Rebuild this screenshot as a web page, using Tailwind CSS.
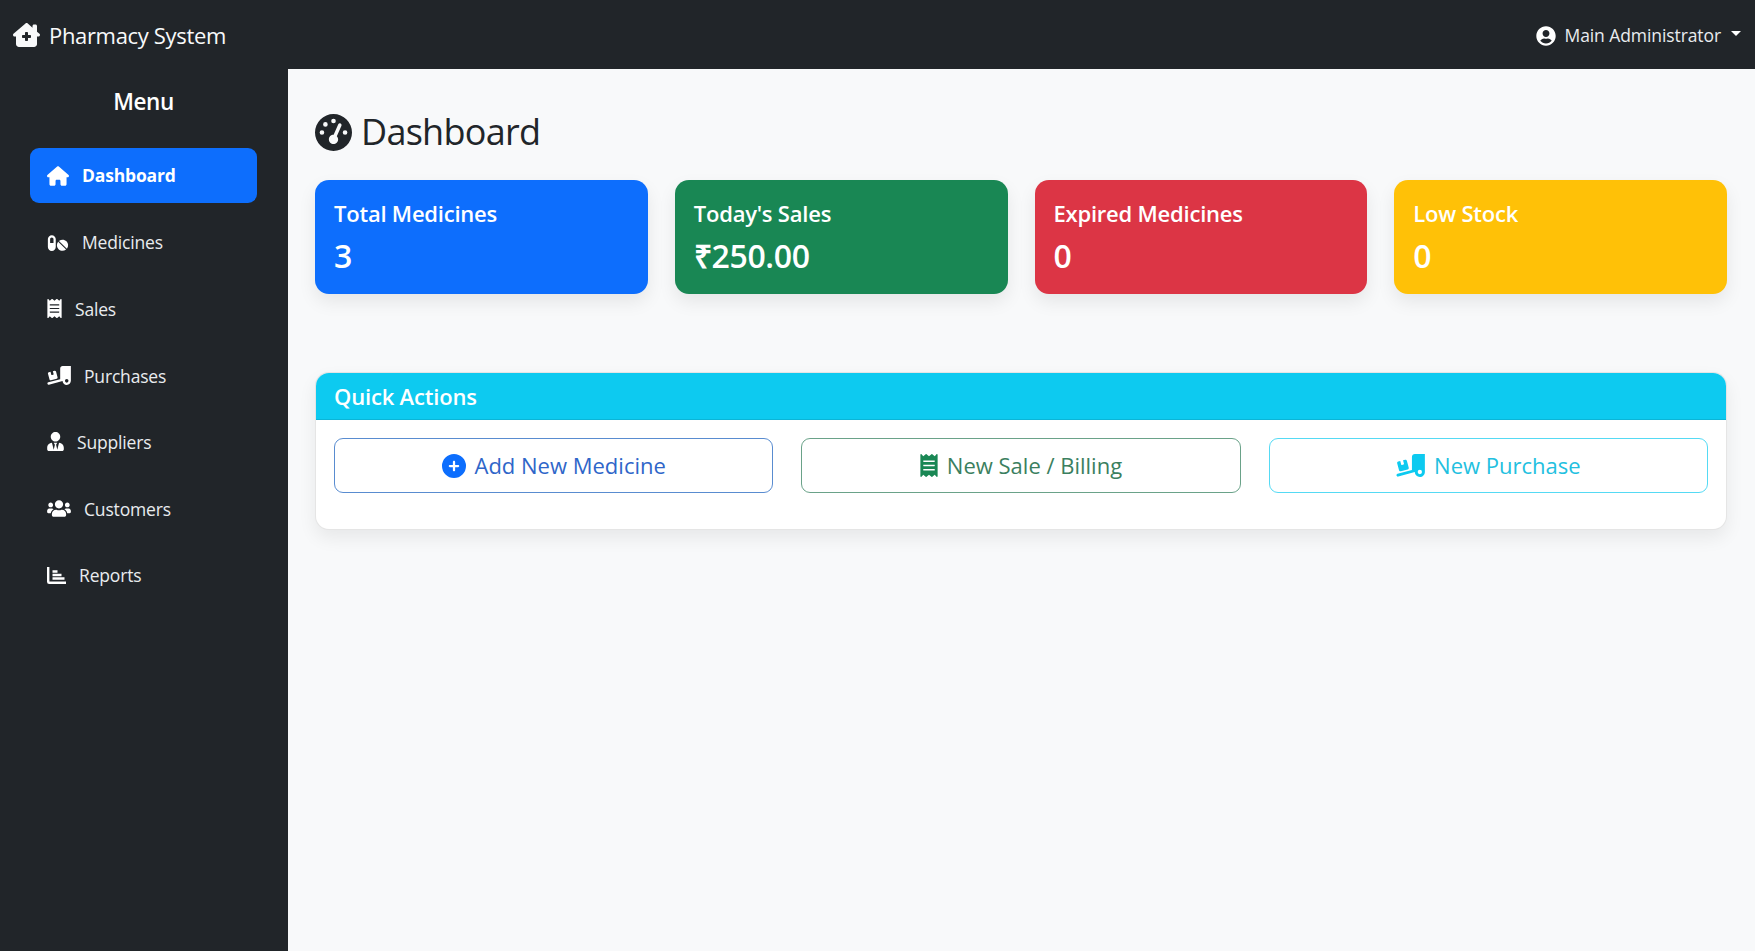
<!DOCTYPE html>
<html lang="en">
<head>
    <meta charset="UTF-8">
    <title>Pharmacy System</title>
    <script src="https://cdn.jsdelivr.net/npm/@tailwindcss/browser@4"></script>
</head>
<body class="bg-[#f8f9fa] font-['Open_Sans',sans-serif] text-[#212529]">
    <div class="h-screen flex flex-col overflow-hidden">
        <!-- navbar -->
        <header class="h-[69px] shrink-0 bg-[#212529] flex items-center justify-between pl-[13px] pr-[14px] pt-[2px] text-white">
            <a href="#" class="flex items-center gap-[9px] text-[22px] tracking-[-0.015em] text-[#f8f9fa]">
                <svg class="w-[27px] h-[24px] mb-[1px] fill-current" viewBox="0 0 576 512"><path d="M543.8 287.6c17 0 32-14 32-32.1c1-9-3-17-11-24L512 185V64c0-17.7-14.3-32-32-32H448c-17.7 0-32 14.3-32 32v36.7L309.5 7c-6-5-14-7-21-7s-15 1-22 8L10 231.5c-7 7-10 15-10 24c0 18 14 32.1 32 32.1h32V448c0 35.3 28.7 64 64 64H448.5c35.5 0 64.2-28.8 64-64.3l-.7-160.2h32zM256 208c0-8.8 7.2-16 16-16h32c8.8 0 16 7.2 16 16v48h48c8.8 0 16 7.2 16 16v32c0 8.8-7.2 16-16 16H320v48c0 8.8-7.2 16-16 16H272c-8.8 0-16-7.2-16-16V320H208c-8.8 0-16-7.2-16-16V272c0-8.8 7.2-16 16-16h48V208z"/></svg>
                Pharmacy System
            </a>
            <a href="#" class="flex items-center text-[17.5px] tracking-[-0.005em] text-[#e9ecef]">
                <svg class="w-[20px] h-[20px] fill-white mr-[9px]" viewBox="0 0 496 512"><path d="M248 8C111 8 0 119 0 256s111 248 248 248 248-111 248-248S385 8 248 8zm0 96c48.6 0 88 39.4 88 88s-39.4 88-88 88-88-39.4-88-88 39.4-88 88-88zm0 344c-58.7 0-111.3-26.6-146.5-68.2 18.8-35.4 55.6-59.8 98.5-59.8 2.4 0 4.8.4 7.1 1.1 13 4.2 26.6 6.9 40.9 6.9 14.3 0 28-2.7 40.9-6.9 2.3-.7 4.7-1.1 7.1-1.1 42.9 0 79.7 24.4 98.5 59.8C359.3 421.4 306.7 448 248 448z"/></svg>
                Main Administrator
                <span class="ml-[10px] mb-[4px] w-0 h-0 border-x-[5.5px] border-x-transparent border-t-[5.5px] border-t-white"></span>
            </a>
        </header>

        <div class="flex flex-1 min-h-0">
            <!-- sidebar -->
            <aside class="w-[288px] shrink-0 bg-[#212529] pl-[30px] pr-[31px] text-[#e9ecef]">
                <h5 class="text-center text-[22.5px] font-semibold tracking-[-0.02em] text-white pt-[16px] h-[79px]">Menu</h5>
                <nav class="flex flex-col gap-[11.6px] text-[17.5px] tracking-[-0.01em]">
                    <a href="#" class="h-[55px] rounded-[9px] bg-[#0d6efd] text-white font-bold flex items-center pl-[17px]">
                        <svg class="w-[22px] h-[20px] fill-white mr-[13px]" viewBox="0 0 576 512"><path d="M575.8 255.5c0 18-15 32.1-32 32.1h-32l.7 160.2c0 2.7-.2 5.4-.5 8.1V472c0 22.1-17.9 40-40 40H456c-1.1 0-2.2 0-3.3-.1c-1.4 .1-2.8 .1-4.2 .1H416 392c-22.1 0-40-17.9-40-40V448 384c0-17.7-14.3-32-32-32H256c-17.7 0-32 14.3-32 32v64 24c0 22.1-17.9 40-40 40H160 128.1c-1.5 0-3-.1-4.5-.2c-1.2 .1-2.4 .2-3.6 .2H104c-22.1 0-40-17.9-40-40V360c0-.9 0-1.9 .1-2.8V287.6H32c-18 0-32-14-32-32.1c0-9 3-17 10-24L266.4 8c7-7 15-8 22-8s15 2 21 7L564.8 231.5c8 7 12 15 11 24z"/></svg>
                        Dashboard
                    </a>
                    <a href="#" class="h-[55px] flex items-center pl-[17px] pt-[1px]">
                        <svg class="w-[22px] h-[18px] fill-white mr-[13px]" viewBox="0 0 576 512"><path d="M112 32C50.1 32 0 82.1 0 144v224c0 61.9 50.1 112 112 112s112-50.1 112-112V144c0-61.9-50.1-112-112-112zm48 224H64V144c0-26.5 21.5-48 48-48s48 21.5 48 48v112zm139.7-29.7c-3.5-3.5-9.4-3.1-12.3.8-45.3 62.5-40.4 150.1 15.9 206.4 56.3 56.3 143.9 61.2 206.4 15.9 4-2.9 4.3-8.8.8-12.3L299.7 226.3zm229.8-19c-56.3-56.3-143.9-61.2-206.4-15.9-4 2.9-4.3 8.8-.8 12.3l210.8 210.8c3.5 3.5 9.4 3.1 12.3-.8 45.3-62.6 40.5-150.1-15.9-206.4z"/></svg>
                        Medicines
                    </a>
                    <a href="#" class="h-[55px] flex items-center pl-[17px]">
                        <svg class="w-[15px] h-[19px] fill-white mr-[13px]" viewBox="0 0 384 512"><path d="M358.4 3.2L320 48 265.6 3.2a15.9 15.9 0 0 0-19.2 0L192 48 137.6 3.2a15.9 15.9 0 0 0-19.2 0L64 48 25.6 3.2C15-4.7 0 2.8 0 16v480c0 13.2 15 20.7 25.6 12.8L64 464l54.4 44.8a15.9 15.9 0 0 0 19.2 0L192 464l54.4 44.8a15.9 15.9 0 0 0 19.2 0L320 464l38.4 44.8c10.5 7.9 25.6.4 25.6-12.8V16c0-13.2-15-20.7-25.6-12.8zM320 360c0 4.4-3.6 8-8 8H72c-4.4 0-8-3.6-8-8v-16c0-4.4 3.6-8 8-8h240c4.4 0 8 3.6 8 8v16zm0-96c0 4.4-3.6 8-8 8H72c-4.4 0-8-3.6-8-8v-16c0-4.4 3.6-8 8-8h240c4.4 0 8 3.6 8 8v16zm0-96c0 4.4-3.6 8-8 8H72c-4.4 0-8-3.6-8-8v-16c0-4.4 3.6-8 8-8h240c4.4 0 8 3.6 8 8v16z"/></svg>
                        Sales
                    </a>
                    <a href="#" class="h-[55px] flex items-center pl-[17px] pt-[1px]">
                        <svg class="w-[24px] h-[19px] fill-white mr-[13px]" viewBox="0 0 640 512"><path d="M640 0V400c0 61.9-50.1 112-112 112c-61 0-110.5-48.7-112-109.3L48.4 502.9c-17.1 4.6-34.6-5.4-39.3-22.5s5.4-34.6 22.5-39.3L352 353.8V64c0-35.3 28.7-64 64-64H640zM576 400a48 48 0 1 0 -96 0 48 48 0 1 0 96 0zM23.1 207.7c-4.6-17.1 5.6-34.6 22.6-39.2l46.4-12.4 20.7 77.3c2.3 8.5 11.1 13.6 19.6 11.3l30.9-8.3c8.5-2.3 13.6-11.1 11.3-19.6l-20.7-77.3 46.4-12.4c17.1-4.6 34.6 5.6 39.2 22.6l41.4 154.5c4.6 17.1-5.6 34.6-22.6 39.2L103.7 384.9c-17.1 4.6-34.6-5.6-39.2-22.6L23.1 207.7z"/></svg>
                        Purchases
                    </a>
                    <a href="#" class="h-[55px] flex items-center pl-[17px]">
                        <svg class="w-[17px] h-[19px] fill-white mr-[13px]" viewBox="0 0 448 512"><path d="M224 256c70.7 0 128-57.3 128-128S294.7 0 224 0 96 57.3 96 128s57.3 128 128 128zm95.8 32.6L272 480l-32-136 32-56h-96l32 56-32 136-47.8-191.4C56.9 292 0 350.3 0 422.4V464c0 26.5 21.5 48 48 48h352c26.5 0 48-21.5 48-48v-41.6c0-72.1-56.9-130.4-128.2-133.8z"/></svg>
                        Suppliers
                    </a>
                    <a href="#" class="h-[55px] flex items-center pl-[17px] pt-[1px]">
                        <svg class="w-[24px] h-[19px] fill-white mr-[13px]" viewBox="0 0 640 512"><path d="M96 224c35.3 0 64-28.7 64-64s-28.7-64-64-64-64 28.7-64 64 28.7 64 64 64zm448 0c35.3 0 64-28.7 64-64s-28.7-64-64-64-64 28.7-64 64 28.7 64 64 64zm32 32h-64c-17.6 0-33.5 7.1-45.1 18.6 40.3 22.1 68.9 62 75.1 109.4h66c17.7 0 32-14.3 32-32v-32c0-35.3-28.7-64-64-64zm-256 0c61.9 0 112-50.1 112-112S381.9 32 320 32 208 82.1 208 144s50.1 112 112 112zm76.8 32h-8.3c-20.8 10-43.9 16-68.5 16s-47.6-6-68.5-16h-8.3C179.6 288 128 339.6 128 403.2V432c0 26.5 21.5 48 48 48h288c26.5 0 48-21.5 48-48v-28.8c0-63.6-51.6-115.2-115.2-115.2zm-223.7-13.4C161.5 263.1 145.6 256 128 256H64c-35.3 0-64 28.7-64 64v32c0 17.7 14.3 32 32 32h65.9c6.3-47.4 34.9-87.3 75.2-109.4z"/></svg>
                        Customers
                    </a>
                    <a href="#" class="h-[55px] flex items-center pl-[17px]">
                        <svg class="w-[19px] h-[17px] fill-none stroke-white mr-[13px]" viewBox="0 0 19 17" stroke-width="2.4"><path d="M1.2 0v14.8a1 1 0 0 0 1 1H19M5.5 4.5h5M5.5 8h9M5.5 11.5h12"/></svg>
                        Reports
                    </a>
                </nav>
            </aside>

            <!-- main content -->
            <main class="flex-1 min-w-0 pl-[27px] pr-[28px] pt-[44px]">
                <h2 class="flex items-center gap-[9px] text-[36px] leading-[38px] font-medium tracking-[-0.02em] mb-[29px]">
                    <svg class="w-[37px] h-[37px] fill-[#212529]" viewBox="0 0 512 512"><path d="M0 256a256 256 0 1 1 512 0A256 256 0 1 1 0 256zM288 96a32 32 0 1 0 -64 0 32 32 0 1 0 64 0zM256 416c35.3 0 64-28.7 64-64c0-17.4-6.9-33.1-18.1-44.6L366 161.7c5.3-12.1-.2-26.3-12.3-31.6s-26.3 .2-31.6 12.3L257.9 288c-.6 0-1.3 0-1.9 0c-35.3 0-64 28.7-64 64s28.7 64 64 64zM176 144a32 32 0 1 0 -64 0 32 32 0 1 0 64 0zM96 288a32 32 0 1 0 0-64 32 32 0 1 0 0 64zm352-32a32 32 0 1 0 -64 0 32 32 0 1 0 64 0z"/></svg>
                    Dashboard
                </h2>

                <div class="grid grid-cols-4 gap-[27px] mb-[78px] text-white">
                    <div class="h-[114px] rounded-[14px] bg-[#0d6efd] px-[19px] pt-[18px] shadow-[0_8px_18px_rgba(0,0,0,0.08)]">
                        <div class="text-[22px] leading-[30px] font-semibold tracking-[-0.01em]">Total Medicines</div>
                        <div class="text-[32px] leading-[40px] mt-[8px] font-semibold tracking-[-0.01em]">3</div>
                    </div>
                    <div class="h-[114px] rounded-[14px] bg-[#198754] px-[19px] pt-[18px] shadow-[0_8px_18px_rgba(0,0,0,0.08)]">
                        <div class="text-[22px] leading-[30px] font-semibold tracking-[-0.01em]">Today's Sales</div>
                        <div class="text-[32px] leading-[40px] mt-[8px] font-semibold tracking-[-0.01em]">₹250.00</div>
                    </div>
                    <div class="h-[114px] rounded-[14px] bg-[#dc3545] px-[19px] pt-[18px] shadow-[0_8px_18px_rgba(0,0,0,0.08)]">
                        <div class="text-[22px] leading-[30px] font-semibold tracking-[-0.01em]">Expired Medicines</div>
                        <div class="text-[32px] leading-[40px] mt-[8px] font-semibold tracking-[-0.01em]">0</div>
                    </div>
                    <div class="h-[114px] rounded-[14px] bg-[#ffc107] px-[19px] pt-[18px] shadow-[0_8px_18px_rgba(0,0,0,0.08)]">
                        <div class="text-[22px] leading-[30px] font-semibold tracking-[-0.01em]">Low Stock</div>
                        <div class="text-[32px] leading-[40px] mt-[8px] font-semibold tracking-[-0.01em]">0</div>
                    </div>
                </div>

                <section class="h-[158px] rounded-[14px] bg-white border border-black/10 overflow-hidden shadow-[0_8px_18px_rgba(0,0,0,0.07)]">
                    <div class="h-[47px] bg-[#0dcaf0] border-b border-black/10 flex items-center pl-[18px] text-white text-[22px] font-semibold tracking-[-0.008em]">Quick Actions</div>
                    <div class="grid grid-cols-3 gap-[28px] px-[18px] pt-[18px] text-[22px]">
                        <a href="#" class="h-[55px] rounded-[9px] border border-[#2f6fc4]/80 text-[#2f66c9] flex items-center justify-center gap-[9px]">
                            <svg class="w-[24px] h-[24px] fill-[#0d6efd]" viewBox="0 0 512 512"><path d="M256 512A256 256 0 1 0 256 0a256 256 0 1 0 0 512zM232 344V280H168c-13.3 0-24-10.7-24-24s10.7-24 24-24h64V168c0-13.3 10.7-24 24-24s24 10.7 24 24v64h64c13.3 0 24 10.7 24 24s-10.7 24-24 24H280v64c0 13.3-10.7 24-24 24s-24-10.7-24-24z"/></svg>
                            Add New Medicine
                        </a>
                        <a href="#" class="h-[55px] rounded-[9px] border border-[#2b7a57]/70 text-[#3b7f60] flex items-center justify-center gap-[9px]">
                            <svg class="w-[18px] h-[23px] fill-[#198754]" viewBox="0 0 384 512"><path d="M358.4 3.2L320 48 265.6 3.2a15.9 15.9 0 0 0-19.2 0L192 48 137.6 3.2a15.9 15.9 0 0 0-19.2 0L64 48 25.6 3.2C15-4.7 0 2.8 0 16v480c0 13.2 15 20.7 25.6 12.8L64 464l54.4 44.8a15.9 15.9 0 0 0 19.2 0L192 464l54.4 44.8a15.9 15.9 0 0 0 19.2 0L320 464l38.4 44.8c10.5 7.9 25.6.4 25.6-12.8V16c0-13.2-15-20.7-25.6-12.8zM320 360c0 4.4-3.6 8-8 8H72c-4.4 0-8-3.6-8-8v-16c0-4.4 3.6-8 8-8h240c4.4 0 8 3.6 8 8v16zm0-96c0 4.4-3.6 8-8 8H72c-4.4 0-8-3.6-8-8v-16c0-4.4 3.6-8 8-8h240c4.4 0 8 3.6 8 8v16zm0-96c0 4.4-3.6 8-8 8H72c-4.4 0-8-3.6-8-8v-16c0-4.4 3.6-8 8-8h240c4.4 0 8 3.6 8 8v16z"/></svg>
                            New Sale / Billing
                        </a>
                        <a href="#" class="h-[55px] rounded-[9px] border border-[#0dcaf0]/70 text-[#22c0e0] flex items-center justify-center gap-[9px]">
                            <svg class="w-[29px] h-[23px] fill-[#0dcaf0]" viewBox="0 0 640 512"><path d="M640 0V400c0 61.9-50.1 112-112 112c-61 0-110.5-48.7-112-109.3L48.4 502.9c-17.1 4.6-34.6-5.4-39.3-22.5s5.4-34.6 22.5-39.3L352 353.8V64c0-35.3 28.7-64 64-64H640zM576 400a48 48 0 1 0 -96 0 48 48 0 1 0 96 0zM23.1 207.7c-4.6-17.1 5.6-34.6 22.6-39.2l46.4-12.4 20.7 77.3c2.3 8.5 11.1 13.6 19.6 11.3l30.9-8.3c8.5-2.3 13.6-11.1 11.3-19.6l-20.7-77.3 46.4-12.4c17.1-4.6 34.6 5.6 39.2 22.6l41.4 154.5c4.6 17.1-5.6 34.6-22.6 39.2L103.7 384.9c-17.1 4.6-34.6-5.6-39.2-22.6L23.1 207.7z"/></svg>
                            New Purchase
                        </a>
                    </div>
                </section>
            </main>
        </div>
    </div>
</body>
</html>
